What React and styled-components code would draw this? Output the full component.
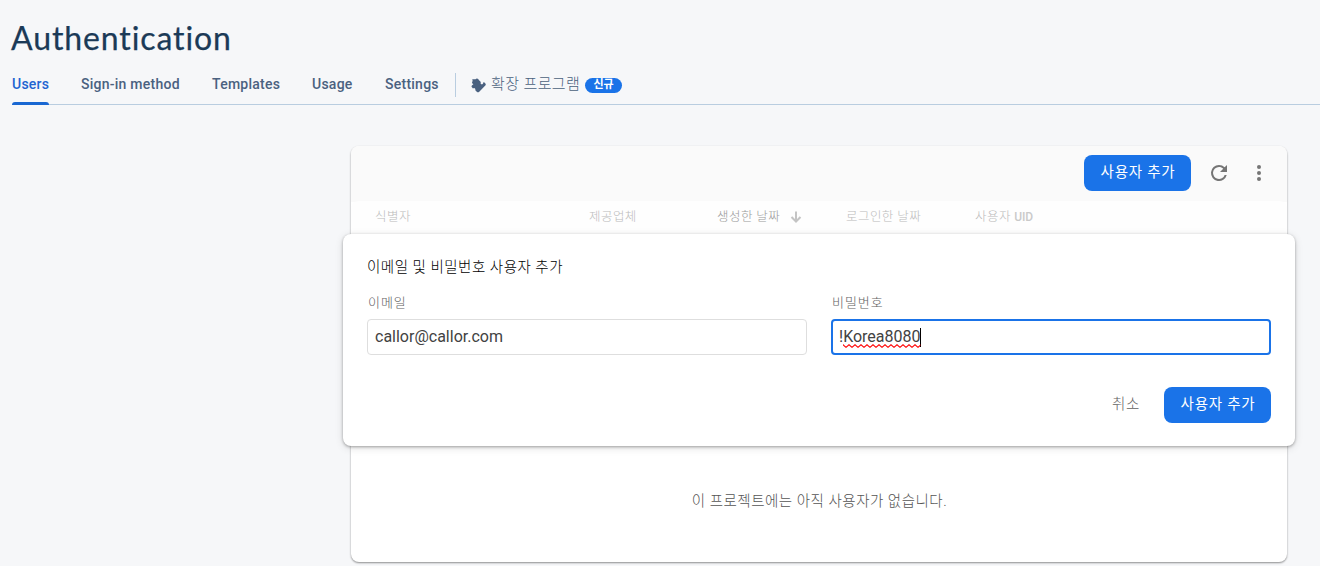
import React from "react";
import styled, { createGlobalStyle } from "styled-components";

const GlobalStyle = createGlobalStyle`
  * { box-sizing: border-box; }
  body {
    margin: 0;
    background: #f6f7f9;
    font-family: Roboto, "Noto Sans CJK KR", sans-serif;
    overflow: hidden;
  }
`;

const Page = styled.div`
  height: 566px;
  overflow: hidden;
`;

const Title = styled.h1`
  margin: 0;
  padding: 18px 0 0 11px;
  height: 64px;
  font: 400 32px/40px Lato, sans-serif;
  letter-spacing: 0.9px;
  color: #1b3a57;
  -webkit-text-stroke: 0.25px #1b3a57;
  white-space: nowrap;
`;

const Tabs = styled.nav`
  display: flex;
  height: 41px;
  margin-left: 12px;
  border-bottom: 1px solid #b9cde0;
`;

const Tab = styled.a`
  position: relative;
  flex: none;
  width: ${(p) => p.$width}px;
  margin-right: ${(p) => p.$gap ?? 32}px;
  font-size: 14px;
  font-weight: 500;
  line-height: 40px;
  letter-spacing: 0.25px;
  white-space: nowrap;
  color: ${(p) => (p.$active ? "#2264d1" : "#4a6180")};

  &::after {
    content: "";
    display: ${(p) => (p.$active ? "block" : "none")};
    position: absolute;
    left: 0;
    right: 0;
    bottom: -1px;
    height: 3px;
    border-radius: 3px 3px 0 0;
    background: #1967d2;
  }
`;

const Extensions = styled.a`
  display: flex;
  align-items: center;
  height: 24px;
  margin-top: 9px;
  padding-left: 15px;
  border-left: 1px solid #b9cde0;
  color: #4a6180;
`;

const ExtensionsLabel = styled.span`
  width: 94px;
  margin-left: 5px;
  padding-bottom: 2px;
  font-size: 15px;
  font-weight: 300;
  line-height: 20px;
  letter-spacing: 0.4px;
  white-space: nowrap;
`;

const Badge = styled.span`
  width: 37px;
  height: 15px;
  border-radius: 8px;
  background: #1a73e8;
  color: #fff;
  font-size: 11px;
  font-weight: 700;
  line-height: 14px;
  text-align: center;
`;

const Card = styled.main`
  width: 936px;
  height: 416px;
  margin: 41px 0 0 351px;
  border-radius: 8px;
  background: #fff;
  box-shadow: 0 1px 2px rgba(0, 0, 0, 0.3), 0 1px 2px rgba(0, 0, 0, 0.16);
`;

const Toolbar = styled.div`
  display: flex;
  align-items: center;
  justify-content: flex-end;
  height: 56px;
  padding: 0 16px 2px 0;
  border-radius: 8px 8px 0 0;
  background: #fafafa;
`;

const PrimaryButton = styled.button`
  width: 107px;
  height: 36px;
  padding: 0 0 1px 1px;
  border: 0;
  border-radius: 8px;
  background: #1a73e8;
  color: #fff;
  font: 400 14.5px/20px Roboto, "Noto Sans CJK KR", sans-serif;
  letter-spacing: 0.75px;
  white-space: nowrap;
`;

const IconButton = styled.button`
  display: flex;
  align-items: center;
  justify-content: center;
  width: 24px;
  height: 24px;
  margin-left: 16px;
  padding: 0;
  border: 0;
  background: none;
  color: #757575;
`;

const TableHead = styled.div`
  display: grid;
  grid-template-columns: 214px 128px 129px 129px 1fr;
  height: 33px;
  margin-top: -1px;
  padding: 1px 0 0 24px;
  background: #fefefe;
  border-radius: 8px 8px 0 0;
`;

const HeadCell = styled.div`
  display: flex;
  align-items: center;
  gap: 10px;
  height: 27px;
  font-size: 12.5px;
  font-weight: 300;
  letter-spacing: 0.45px;
  color: ${(p) => (p.$sorted ? "#9a9a9a" : "#bcbcbc")};
  white-space: nowrap;

  b { font-weight: 500; font-size: 12px; letter-spacing: -0.2px; color: #cacaca; }
  svg { color: #c4c4c4; position: relative; top: 1px; }
`;

const Form = styled.form`
  position: relative;
  height: 212px;
  margin: 0 -8px;
  padding: 21px 24px 0;
  border-radius: 8px;
  background: #fff;
  box-shadow: 0 1px 3px rgba(0, 0, 0, 0.32), 0 2px 8px rgba(0, 0, 0, 0.12);
`;

const FormTitle = styled.h2`
  margin: 0;
  padding-top: 1px;
  font-size: 14.5px;
  font-weight: 300;
  line-height: 24px;
  letter-spacing: 0.5px;
  color: #000;
`;

const Fields = styled.div`
  display: grid;
  grid-template-columns: 440px 440px;
  gap: 24px;
  margin-top: 12px;
`;

const Label = styled.div`
  height: 27px;
  padding: 1px 0 0 1px;
  font-size: 13px;
  font-weight: 300;
  line-height: 20px;
  letter-spacing: 0.95px;
  color: #616161;
`;

const Input = styled.div`
  display: flex;
  align-items: center;
  height: 36px;
  padding: 0 ${(p) => (p.$focused ? 6 : 7)}px;
  border: ${(p) => (p.$focused ? "2px solid #1a73e8" : "1px solid #dedede")};
  border-radius: 4px;
  font-size: 16px;
  line-height: 20px;
  color: #424242;
`;

const Misspelled = styled.span`
  position: relative;

  svg {
    position: absolute;
    left: 0;
    bottom: -1px;
    width: 100%;
    height: 4px;
  }
`;

const Caret = styled.i`
  width: 1px;
  height: 19px;
  margin-left: -1px;
  background: #000;
`;

const Actions = styled.div`
  display: flex;
  align-items: center;
  justify-content: flex-end;
  gap: 24px;
  margin-top: 32px;
`;

const Cancel = styled.button`
  padding: 0;
  border: 0;
  background: none;
  color: #616161;
  font: 300 14.5px/20px Roboto, "Noto Sans CJK KR", sans-serif;
  letter-spacing: 0.7px;
`;

const Empty = styled.p`
  margin: 0;
  padding: 46px 0 0 1px;
  text-align: center;
  font-size: 14.5px;
  font-weight: 300;
  line-height: 20px;
  letter-spacing: 0.5px;
  color: #545454;
`;

const ExtensionIcon = () => (
  <svg width="15" height="15" viewBox="0 0 15 15" fill="currentColor">
    <path d="M1.4 2.3 Q.8 1.4 1.8 1.3 L4.6 1.2 Q5 .4 6 .4 Q7.6.4 7.8 2 L9.6 3.7 Q10 4.5 9.6 5.4 Q10.2 6.6 11.4 6.2 Q12.4 5.7 12.2 4.6 Q13 3.9 13.8 4.8 L14.7 6 Q15 7 14.3 7.6 L8 13.9 Q7 14.8 6 13.9 L4.3 12.2 Q4.7 10.8 3.7 10.3 Q2.8 9.9 2 10.4 L.7 8.9 Q.2 8 .9 7.4 L2.4 6.2 Q1.2 5.8 1 4.6 Q.9 3.6 1.8 3.1 Z" />
  </svg>
);

const RefreshIcon = () => (
  <svg width="24" height="24" viewBox="0 0 24 24" fill="currentColor">
    <path d="M17.65 6.35A7.96 7.96 0 0 0 12 4a8 8 0 1 0 7.73 10h-2.08A6 6 0 1 1 12 6c1.66 0 3.14.69 4.22 1.78L13 11h7V4z" />
  </svg>
);

const MoreIcon = () => (
  <svg width="24" height="24" viewBox="0 0 24 24" fill="currentColor">
    <circle cx="12" cy="6" r="2" />
    <circle cx="12" cy="12" r="2" />
    <circle cx="12" cy="18" r="2" />
  </svg>
);

const SortIcon = () => (
  <svg width="12" height="12" viewBox="0 0 12 12" fill="none" stroke="currentColor" strokeWidth="2">
    <path d="M6 .5V10M1.5 6 6 10.5 10.5 6" />
  </svg>
);

const Squiggle = () => (
  <svg>
    <defs>
      <pattern id="wave" width="6" height="4" patternUnits="userSpaceOnUse">
        <path d="M-1.5 2 L0 .7 L3 3.3 L6 .7 L7.5 2" fill="none" stroke="#f00" strokeWidth="1.1" />
      </pattern>
    </defs>
    <rect width="100%" height="4" fill="url(#wave)" />
  </svg>
);

export default function App() {
  return (
    <Page>
      <GlobalStyle />
      <Title>Authentication</Title>
      <Tabs>
        <Tab $active $width={37}>Users</Tab>
        <Tab $width={99}>Sign-in method</Tab>
        <Tab $width={68}>Templates</Tab>
        <Tab $width={41}>Usage</Tab>
        <Tab $width={54} $gap={16}>Settings</Tab>
        <Extensions>
          <ExtensionIcon />
          <ExtensionsLabel>확장 프로그램</ExtensionsLabel>
          <Badge>신규</Badge>
        </Extensions>
      </Tabs>
      <Card>
        <Toolbar>
          <PrimaryButton>사용자 추가</PrimaryButton>
          <IconButton aria-label="새로고침"><RefreshIcon /></IconButton>
          <IconButton aria-label="더보기"><MoreIcon /></IconButton>
        </Toolbar>
        <TableHead>
          <HeadCell>식별자</HeadCell>
          <HeadCell>제공업체</HeadCell>
          <HeadCell $sorted>생성한 날짜 <SortIcon /></HeadCell>
          <HeadCell>로그인한 날짜</HeadCell>
          <HeadCell><span>사용자 <b>UID</b></span></HeadCell>
        </TableHead>
        <Form>
          <FormTitle>이메일 및 비밀번호 사용자 추가</FormTitle>
          <Fields>
            <div>
              <Label>이메일</Label>
              <Input>callor@callor.com</Input>
            </div>
            <div>
              <Label>비밀번호</Label>
              <Input $focused>
                !<Misspelled>Korea8080<Squiggle /></Misspelled><Caret />
              </Input>
            </div>
          </Fields>
          <Actions>
            <Cancel type="button">취소</Cancel>
            <PrimaryButton type="button">사용자 추가</PrimaryButton>
          </Actions>
        </Form>
        <Empty>이 프로젝트에는 아직 사용자가 없습니다.</Empty>
      </Card>
    </Page>
  );
}
